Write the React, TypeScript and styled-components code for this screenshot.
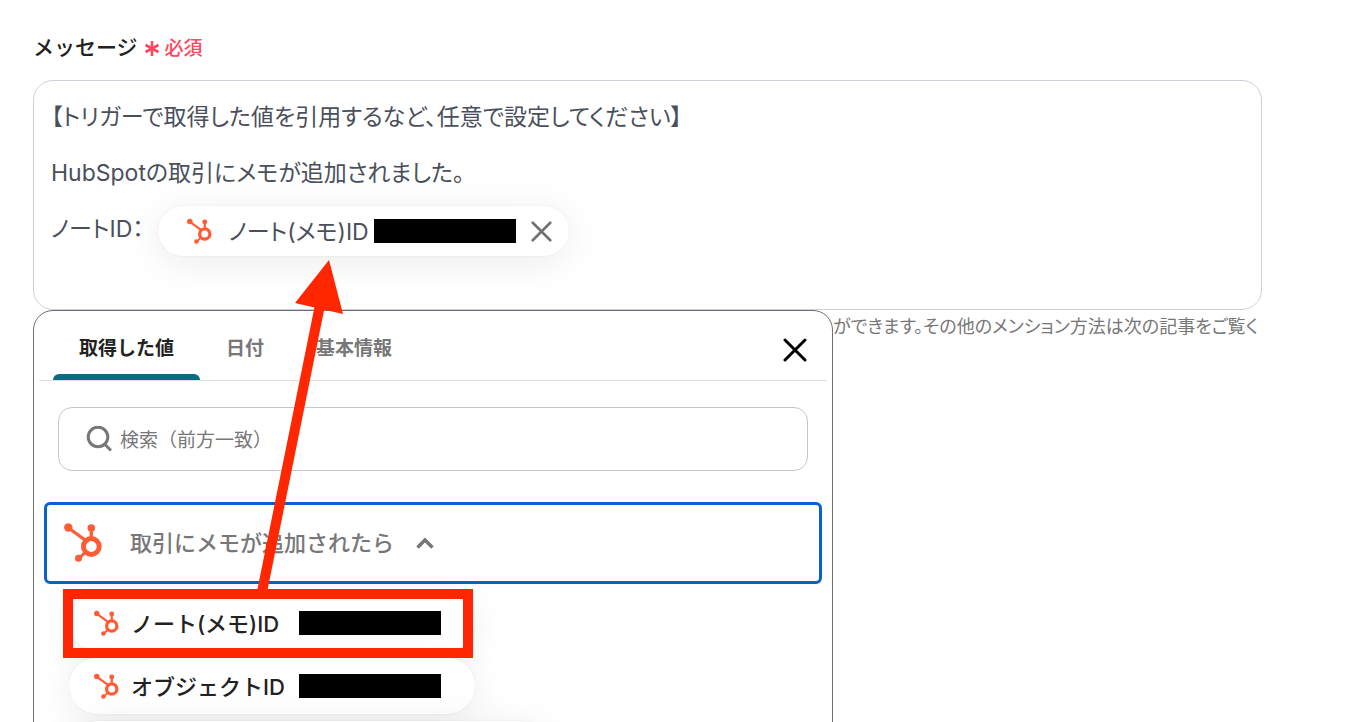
import React from "react";
import styled, { createGlobalStyle } from "styled-components";

const GlobalStyle = createGlobalStyle`
  *, *::before, *::after { box-sizing: border-box; }
  body {
    margin: 0;
    background: #fff;
    color: #222;
    font-family: Inter, "Noto Sans CJK JP", sans-serif;
  }
  button, input { font: inherit; color: inherit; }
  button { cursor: pointer; }
`;

const Page = styled.main`
  position: relative;
  height: 100vh;
  overflow: hidden;
  padding: 30px 90px 0 33px;
`;

const FieldLabel = styled.div`
  display: flex;
  align-items: center;
  gap: 6px;
  height: 32px;
  font-size: 21px;
  font-weight: 500;
`;

const Required = styled.span`
  display: flex;
  align-items: center;
  gap: 5px;
  color: #ff4760;
  font-size: 19px;
`;

const Editor = styled.div`
  margin-top: 18px;
  min-height: 230px;
  padding: 6px 17px;
  border: 1px solid #cdd2da;
  border-radius: 20px;
  color: #4a505b;
  font-size: 23px;
  font-feature-settings: "palt";
  outline: none;
`;

const Line = styled.p`
  display: flex;
  align-items: center;
  gap: 14px;
  height: 56px;
  margin: 0;
  white-space: nowrap;
`;

const Token = styled.span`
  display: flex;
  align-items: center;
  height: 50px;
  margin-top: 8px;
  padding: 0 17px 0 29px;
  border-radius: 25px;
  background: #fff;
  box-shadow: 0 6px 38px rgba(0, 0, 0, 0.08), 0 0 2px rgba(0, 0, 0, 0.08);
`;

const TokenText = styled.span`
  margin: 0 5px 0 16px;
  padding-bottom: 3px;
`;

const Redacted = styled.span`
  width: 142px;
  height: 24px;
  background: #000;
`;

const IconButton = styled.button`
  display: flex;
  padding: 0;
  border: 0;
  background: none;
`;

const RemoveButton = styled(IconButton)`
  margin-left: 15px;
`;

const Helper = styled.p`
  margin: 4px 4px 0 0;
  color: #777;
  font-size: 18px;
  line-height: 26px;
  font-feature-settings: "palt";
  text-align: right;
`;

const Panel = styled.section`
  position: absolute;
  top: 310px;
  left: 33px;
  width: 800px;
  max-width: calc(100% - 66px);
  min-height: 480px;
  border: 1px solid #6d6f74;
  border-radius: 20px;
  background: #fff;
  box-shadow: 0 0 30px rgba(0, 0, 0, 0.01);
`;

const PanelHeader = styled.header`
  display: flex;
  align-items: stretch;
  justify-content: space-between;
  height: 70px;
  margin: 0 5px;
  padding: 0 20px 0 14px;
  border-bottom: 1px solid #dfe0e2;
`;

const TabList = styled.div`
  display: flex;
`;

const Tab = styled.button<{ $active?: boolean }>`
  position: relative;
  padding: 2px 26px 0;
  border: 0;
  background: none;
  color: ${(p) => (p.$active ? "#222" : "#777")};
  font-size: 19px;
  font-weight: 700;
  &::after {
    content: "";
    position: absolute;
    left: 0;
    right: 0;
    bottom: 0;
    height: 6px;
    border-radius: 6px 6px 0 0;
    background: ${(p) => (p.$active ? "#0b6b82" : "transparent")};
  }
`;

const PanelClose = styled(IconButton)`
  align-items: center;
  padding-top: 8px;
`;

const SearchBox = styled.label`
  display: flex;
  align-items: center;
  gap: 8px;
  height: 64px;
  margin: 26px 24px 0;
  padding: 0 27px;
  border: 1px solid #c6c7ca;
  border-radius: 14px;
  color: #777;
`;

const SearchInput = styled.input`
  flex: 1;
  min-width: 0;
  padding: 2px 0 0;
  border: 0;
  outline: none;
  background: none;
  font-size: 19px;
  &::placeholder { color: #777; opacity: 1; }
`;

const Accordion = styled.button`
  display: flex;
  align-items: center;
  width: calc(100% - 20px);
  height: 82px;
  margin: 31px 10px 0;
  padding: 0 17px 2px;
  border: 3px solid #0a61cb;
  border-radius: 6px;
  background: #fff;
  color: #777;
  font-size: 22px;
  font-weight: 500;
`;

const AccordionText = styled.span`
  margin: 0 21px 0 26px;
  padding-bottom: 2px;
`;

const Options = styled.ul`
  display: flex;
  flex-direction: column;
  align-items: flex-start;
  gap: 7px;
  margin: 11px 35px 0;
  padding: 0;
  list-style: none;
`;

const Option = styled.button<{ $width: number }>`
  display: flex;
  align-items: center;
  width: ${(p) => p.$width}px;
  height: 56px;
  padding: 0 25px;
  border: 0;
  border-radius: 28px;
  background: #fff;
  box-shadow: 0 6px 38px rgba(0, 0, 0, 0.08), 0 0 2px rgba(0, 0, 0, 0.08);
  font-size: 22px;
  font-weight: 500;
  text-align: left;
`;

const OptionText = styled.span`
  min-width: 168px;
  margin-left: 11px;
  padding-bottom: 3px;
`;

const Annotation = styled.svg`
  position: absolute;
  top: 0;
  left: 0;
  pointer-events: none;
`;

const HubSpotIcon = ({ size }: { size: number }) => (
  <svg width={size} height={size} viewBox="0 0 40 40" fill="none" stroke="#ff5c35" aria-hidden="true">
    <path d="M4 5.500 21 18" strokeWidth="3.400" />
    <path d="M27.300 7v10" strokeWidth="3.400" />
    <path d="M14.500 37l8-8" strokeWidth="3" />
    <circle cx="27.300" cy="24.500" r="7.900" strokeWidth="5" />
    <g fill="#ff5c35" stroke="none">
      <circle cx="4.300" cy="5.500" r="4.200" />
      <circle cx="27.300" cy="6" r="3.800" />
      <circle cx="14.500" cy="36.300" r="3.500" />
    </g>
  </svg>
);

const CloseIcon = ({ size, color, weight }: { size: number; color: string; weight: number }) => (
  <svg width={size} height={size} viewBox="0 0 24 24" fill="none" stroke={color} strokeWidth={weight} strokeLinecap="round">
    <path d="M2 2 22 22M22 2 2 22" />
  </svg>
);

export default function App() {
  return (
    <>
      <GlobalStyle />
      <Page>
        <FieldLabel>
          <span id="message-label">メッセージ</span>
          <Required>
            <svg width="16" height="20" viewBox="0 0 16 20" fill="none" stroke="currentColor" strokeWidth="2.600" aria-hidden="true">
              <path d="M8 5v15M1.500 9l13 7M14.500 9l-13 7" />
            </svg>
            必須
          </Required>
        </FieldLabel>
        <Editor contentEditable suppressContentEditableWarning role="textbox" aria-multiline="true" aria-labelledby="message-label">
          <Line>【トリガーで取得した値を引用するなど、任意で設定してください】</Line>
          <Line>HubSpotの取引にメモが追加されました。</Line>
          <Line>
            ノートID：
            <Token contentEditable={false}>
              <HubSpotIcon size={26} />
              <TokenText>ノート(メモ)ID</TokenText>
              <Redacted />
              <RemoveButton type="button" aria-label="削除">
                <CloseIcon size={21} color="#707175" weight={3} />
              </RemoveButton>
            </Token>
          </Line>
        </Editor>
        <Helper>ができます。その他のメンション方法は次の記事をご覧く</Helper>

        <Panel>
          <PanelHeader>
            <TabList role="tablist">
              <Tab type="button" role="tab" aria-selected="true" $active>取得した値</Tab>
              <Tab type="button" role="tab" aria-selected="false">日付</Tab>
              <Tab type="button" role="tab" aria-selected="false">基本情報</Tab>
            </TabList>
            <PanelClose type="button" aria-label="閉じる">
              <CloseIcon size={24} color="#000" weight={3} />
            </PanelClose>
          </PanelHeader>
          <SearchBox>
            <svg width="26" height="26" viewBox="0 0 26 26" fill="none" stroke="currentColor" strokeWidth="3" aria-hidden="true">
              <circle cx="12" cy="11" r="9.800" />
              <path d="M18.500 18 25 24.500" />
            </svg>
            <SearchInput type="search" aria-label="検索" placeholder="検索（前方一致）" />
          </SearchBox>
          <Accordion type="button" aria-expanded="true">
            <HubSpotIcon size={40} />
            <AccordionText>取引にメモが追加されたら</AccordionText>
            <svg width="20" height="14" viewBox="0 0 20 14" fill="none" stroke="#777" strokeWidth="3.500" aria-hidden="true">
              <path d="M2.500 12.500l7.500-7.500 7.500 7.500" />
            </svg>
          </Accordion>
          <Options>
            <li>
              <Option type="button" $width={406}>
                <HubSpotIcon size={26} />
                <OptionText>ノート(メモ)ID</OptionText>
                <Redacted />
              </Option>
            </li>
            <li>
              <Option type="button" $width={406}>
                <HubSpotIcon size={26} />
                <OptionText>オブジェクトID</OptionText>
                <Redacted />
              </Option>
            </li>
            <li>
              <Option type="button" $width={480} />
            </li>
          </Options>
        </Panel>

        <Annotation width="480" height="670" viewBox="0 0 480 670" aria-hidden="true">
          <path d="M262 592 320 305" stroke="#ff2600" strokeWidth="10" />
          <path d="M329 260 343 314 295 303Z" fill="#ff2600" />
          <rect x="68" y="594" width="400" height="59" fill="none" stroke="#ff2600" strokeWidth="10" />
        </Annotation>
      </Page>
    </>
  );
}
